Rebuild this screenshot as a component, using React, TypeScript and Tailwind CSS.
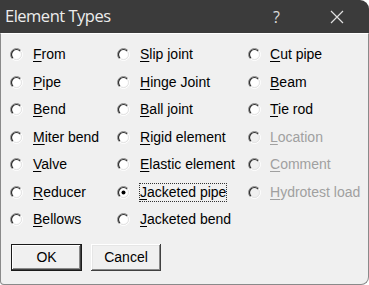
import React from "react";

type Item = { label: string; disabled?: boolean; checked?: boolean; focused?: boolean };

const col1: Item[] = [
  { label: "From" },
  { label: "Pipe" },
  { label: "Bend" },
  { label: "Miter bend" },
  { label: "Valve" },
  { label: "Reducer" },
  { label: "Bellows" },
];
const col2: Item[] = [
  { label: "Slip joint" },
  { label: "Hinge Joint" },
  { label: "Ball joint" },
  { label: "Rigid element" },
  { label: "Elastic element" },
  { label: "Jacketed pipe", checked: true, focused: true },
  { label: "Jacketed bend" },
];
const col3: Item[] = [
  { label: "Cut pipe" },
  { label: "Beam" },
  { label: "Tie rod" },
  { label: "Location", disabled: true },
  { label: "Comment", disabled: true },
  { label: "Hydrotest load", disabled: true },
];

function arc(r: number, upper: boolean) {
  const c = 6.5;
  const d = r * Math.SQRT1_2;
  const bl = `${c - d} ${c + d}`;
  const tr = `${c + d} ${c - d}`;
  return upper ? `M${bl} A${r} ${r} 0 0 1 ${tr}` : `M${tr} A${r} ${r} 0 0 1 ${bl}`;
}

function Radio({ checked, disabled }: { checked?: boolean; disabled?: boolean }) {
  return (
    <svg width="13" height="13" viewBox="0 0 13 13" className="shrink-0">
      <circle cx="6.5" cy="6.5" r="5" fill={disabled ? "#f0f0f0" : "#ffffff"} />
      <path d={arc(6, true)} stroke="#8a8a8a" strokeWidth="1" fill="none" />
      <path d={arc(6, false)} stroke="#ffffff" strokeWidth="1" fill="none" />
      <path d={arc(5, true)} stroke="#2e2e2e" strokeWidth="1.2" fill="none" />
      <path d={arc(5, false)} stroke="#e2e2e2" strokeWidth="1" fill="none" />
      {checked && <circle cx="6.5" cy="6.5" r="2" fill="#000" />}
    </svg>
  );
}

function Row({ item, gap }: { item: Item; gap: string }) {
  const first = item.label[0];
  const rest = item.label.slice(1);
  return (
    <div className={"h-[27.5px] flex items-center " + gap}>
      <Radio checked={item.checked} disabled={item.disabled} />
      <span
        className={
          "leading-[17px] border -ml-[1px] " +
          (item.focused ? "border-dotted border-[#333]" : "border-transparent") +
          (item.disabled ? " text-[#a0a0a0]" : " text-black")
        }
      >
        <span className="underline underline-offset-[2px] decoration-1">{first}</span>
        {rest}
      </span>
    </div>
  );
}

export default function App() {
  return (
    <div
      className="w-[369px] h-[285px] bg-white flex flex-col"
      style={{ fontFamily: '"Liberation Sans", Arial, sans-serif' }}
    >
      <div className="h-[33px] bg-[#3b3b3b] rounded-tr-[9px] flex items-center shrink-0">
        <span
          className="ml-[5px] text-[16.5px] text-[#ececec] tracking-[-0.5px]"
          style={{ fontFamily: '"Open Sans", "Noto Sans", sans-serif' }}
        >
          Element Types
        </span>
        <span
          className="ml-auto text-[16px] text-[#dcdcdc] mr-[50px]"
          style={{ fontFamily: '"Open Sans", "Noto Sans", sans-serif' }}
        >
          ?
        </span>
        <svg width="14" height="14" viewBox="0 0 14 14" className="mr-[25px]">
          <path d="M1 1 L13 13 M13 1 L1 13" stroke="#e0e0e0" strokeWidth="1.2" />
        </svg>
      </div>
      <div className="flex-1 bg-[#f0f0f0] border-l border-r border-b border-[#8a8a8a] rounded-br-[8px] rounded-bl-[4px] border-t border-t-white flex flex-col">
        <div className="grid grid-cols-[107px_131px_1fr] pl-[9px] pt-[7px] text-[14px]">
          <div className="flex flex-col">
            {col1.map((it) => (
              <Row key={it.label} item={it} gap="gap-[10px]" />
            ))}
          </div>
          <div className="flex flex-col">
            {col2.map((it) => (
              <Row key={it.label} item={it} gap="gap-[10px]" />
            ))}
          </div>
          <div className="flex flex-col">
            {col3.map((it) => (
              <Row key={it.label} item={it} gap="gap-[9px]" />
            ))}
          </div>
        </div>
        <div className="flex gap-[9px] pl-[10px] mt-[10px] text-[14px]">
          <button className="w-[71px] h-[27px] bg-[#f0f0f0] border border-[#1a1a1a] shadow-[inset_-1px_-1px_#404040,inset_1px_1px_#ffffff,inset_-2px_-2px_#8a8a8a] text-black flex items-center justify-center">
            OK
          </button>
          <button className="w-[70px] h-[27px] bg-[#f0f0f0] shadow-[inset_-1px_-1px_#404040,inset_1px_1px_#ffffff,inset_-2px_-2px_#8a8a8a,inset_2px_2px_#e6e6e6] text-black flex items-center justify-center">
            Cancel
          </button>
        </div>
      </div>
    </div>
  );
}
